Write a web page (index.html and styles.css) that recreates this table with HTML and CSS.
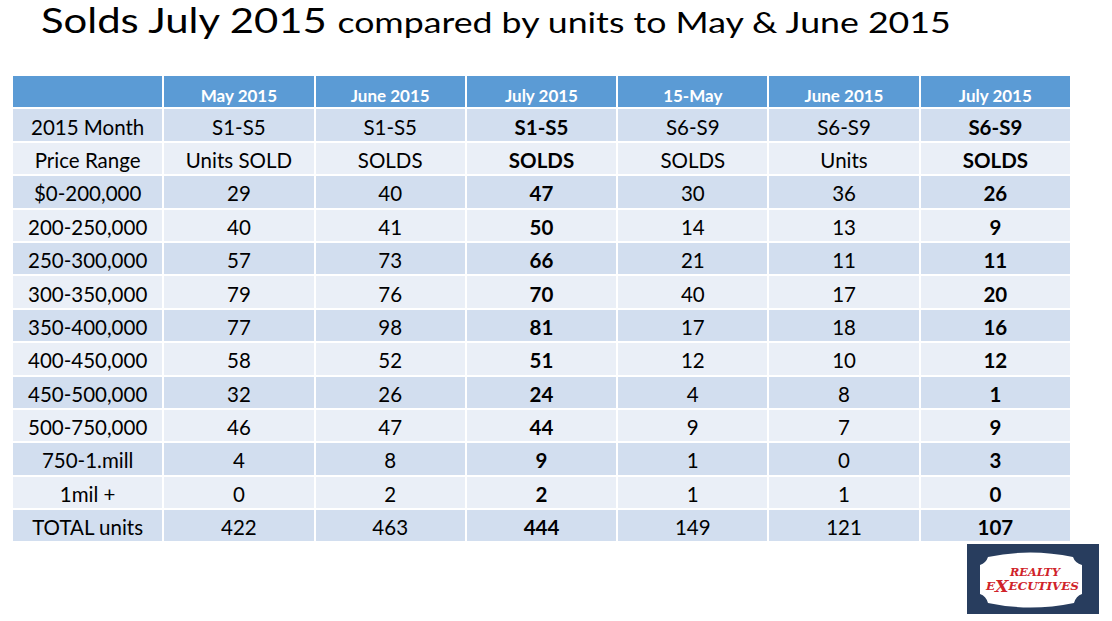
FILE: index.html
```html
<!DOCTYPE html>
<html>
<head>
<meta charset="utf-8">
<link rel="stylesheet" href="styles.css">
</head>
<body>
<div class="slide">
  <h1 class="title"><span class="title-inner"><span class="big">Solds July 2015</span> <span class="small">compared by units to May &amp; June 2015</span></span></h1>
  <table class="grid">
    <colgroup><col><col><col><col><col><col><col></colgroup>
    <thead>
      <tr><th></th><th>May 2015</th><th>June 2015</th><th>July 2015</th><th>15-May</th><th>June 2015</th><th>July 2015</th></tr>
    </thead>
    <tbody>
      <tr><td>2015 Month</td><td>S1-S5</td><td>S1-S5</td><td class="b">S1-S5</td><td>S6-S9</td><td>S6-S9</td><td class="b">S6-S9</td></tr>
      <tr><td>Price Range</td><td>Units SOLD</td><td>SOLDS</td><td class="b">SOLDS</td><td>SOLDS</td><td>Units</td><td class="b">SOLDS</td></tr>
      <tr><td>$0-200,000</td><td>29</td><td>40</td><td class="b">47</td><td>30</td><td>36</td><td class="b">26</td></tr>
      <tr><td>200-250,000</td><td>40</td><td>41</td><td class="b">50</td><td>14</td><td>13</td><td class="b">9</td></tr>
      <tr><td>250-300,000</td><td>57</td><td>73</td><td class="b">66</td><td>21</td><td>11</td><td class="b">11</td></tr>
      <tr><td>300-350,000</td><td>79</td><td>76</td><td class="b">70</td><td>40</td><td>17</td><td class="b">20</td></tr>
      <tr><td>350-400,000</td><td>77</td><td>98</td><td class="b">81</td><td>17</td><td>18</td><td class="b">16</td></tr>
      <tr><td>400-450,000</td><td>58</td><td>52</td><td class="b">51</td><td>12</td><td>10</td><td class="b">12</td></tr>
      <tr><td>450-500,000</td><td>32</td><td>26</td><td class="b">24</td><td>4</td><td>8</td><td class="b">1</td></tr>
      <tr><td>500-750,000</td><td>46</td><td>47</td><td class="b">44</td><td>9</td><td>7</td><td class="b">9</td></tr>
      <tr><td>750-1.mill</td><td>4</td><td>8</td><td class="b">9</td><td>1</td><td>0</td><td class="b">3</td></tr>
      <tr><td>1mil +</td><td>0</td><td>2</td><td class="b">2</td><td>1</td><td>1</td><td class="b">0</td></tr>
      <tr><td>TOTAL units</td><td>422</td><td>463</td><td class="b">444</td><td>149</td><td>121</td><td class="b">107</td></tr>
    </tbody>
  </table>
  <div class="logo-row">
    <svg class="logo" width="132" height="70" viewBox="0 0 132 70" xmlns="http://www.w3.org/2000/svg">
      <rect x="0" y="0" width="132" height="70" fill="#283d5e"/>
      <path d="M13,21 Q19,19 21,13 Q63,4 106,13 Q108,19 115,21 L115,50 Q109,52 107,59 Q63,68 21,59 Q19,52 13,50 Z" fill="#ffffff"/>
      <text x="43" y="32" textLength="50" lengthAdjust="spacingAndGlyphs" class="logo-t1">REALTY</text>
      <text x="19" y="46" textLength="93" lengthAdjust="spacingAndGlyphs" class="logo-t2">E<tspan class="logo-x" dy="2">X</tspan><tspan dy="-2">ECUTIVES</tspan></text>
    </svg>
  </div>
</div>
</body>
</html>
```
FILE: styles.css
```css
html, body {
  margin: 0;
  padding: 0;
  background: #ffffff;
}
.slide {
  width: 1112px;
  height: 621px;
  position: relative;
  overflow: hidden;
  font-family: Lato, "Open Sans", sans-serif;
  color: #000;
}
.title {
  margin: 0;
  padding: 0 0 0 41px;
  height: 74px;
  font-weight: normal;
  font-size: 34px;
  white-space: nowrap;
  line-height: 40px;
}
.title-inner {
  display: inline-block;
  transform: scaleX(1.23);
  transform-origin: left center;
}
.title .big {
  font-size: 34px;
}
.title .small {
  font-size: 29px;
}
.grid {
  margin-left: 11px;
  border-collapse: collapse;
  table-layout: fixed;
  width: 1061px;
}
.grid th, .grid td {
  border: 2px solid #ffffff;
  padding: 0;
  text-align: center;
  height: 33.4px;
  box-sizing: border-box;
}
.grid th {
  background: #5b9bd5;
  color: #ffffff;
  font-weight: bold;
  font-size: 17px;
  vertical-align: bottom;
  padding-bottom: 1px;
}
.grid td {
  font-size: 20.5px;
  vertical-align: middle;
  padding-top: 3px;
}
.grid tbody tr:nth-child(odd) td {
  background: #d2deef;
}
.grid tbody tr:nth-child(even) td {
  background: #eaeff7;
}
.grid td.b {
  font-weight: bold;
}
.logo-row {
  display: flex;
  justify-content: flex-end;
  padding-right: 13px;
  margin-top: 1px;
}
.logo {
  display: block;
}
.logo-t1, .logo-t2 {
  font-family: "DejaVu Serif", "Liberation Serif", serif;
  font-weight: bold;
  font-style: italic;
  fill: #d0232a;
  font-size: 11px;
}
.logo-x {
  font-size: 16px;
}
```
